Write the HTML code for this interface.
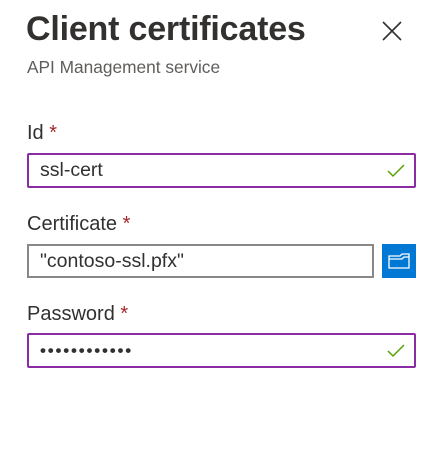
<!DOCTYPE html>
<html><head><style>
*{margin:0;padding:0;box-sizing:border-box}
body{width:441px;height:455px;background:#fff;font-family:"Liberation Sans",sans-serif;position:relative;overflow:hidden;color:#323130}
.a{position:absolute}
h1{position:absolute;left:26px;top:10px;font-size:34px;font-weight:bold;color:#323130;letter-spacing:-0.2px}
.sub{left:27px;top:57px;font-size:17.3px;color:#605e5c}
.lab{font-size:20px;left:27px;color:#323130}
.lab span{color:#a4262c}
.inp{left:27px;width:389px;height:35px;border:2px solid #8a2da5;border-radius:2px;font-size:19.5px;padding-left:11px;line-height:31px}
.chk{position:absolute;right:9px;top:9px}
</style></head><body>
<h1>Client certificates</h1>
<svg class="a" style="left:382px;top:21px" width="20" height="20" viewBox="0 0 20 20"><path d="M1 1L19 19M19 1L1 19" stroke="#323130" stroke-width="1.6" fill="none"/></svg>
<div class="a sub">API Management service</div>
<div class="a lab" style="top:122px">Id <span>*</span></div>
<div class="a inp" style="top:153px">ssl-cert<svg class="chk" width="18" height="14" viewBox="0 0 18 14"><path d="M1 7L6 12L17 1" stroke="#57a300" stroke-width="1.5" fill="none"/></svg></div>
<div class="a lab" style="top:213px">Certificate <span>*</span></div>
<div class="a" style="left:27px;top:244px;width:347px;height:34px;border:2px solid #8a8886;font-size:19.5px;padding-left:11px;line-height:30px">"contoso-ssl.pfx"</div>
<div class="a" style="left:382px;top:244px;width:34px;height:34px;background:#0078d4"><svg width="34" height="34" viewBox="0 0 34 34"><path d="M7 12H18L20 10H27V24H7Z M7 15H20L22 13H27" stroke="#fff" stroke-width="1.3" fill="none"/></svg></div>
<div class="a lab" style="top:303px">Password <span>*</span></div>
<div class="a inp" style="top:333px;letter-spacing:1.8px;font-size:17px;font-weight:bold">&#8226;&#8226;&#8226;&#8226;&#8226;&#8226;&#8226;&#8226;&#8226;&#8226;&#8226;&#8226;<svg class="chk" width="18" height="14" viewBox="0 0 18 14"><path d="M1 7L6 12L17 1" stroke="#57a300" stroke-width="1.5" fill="none"/></svg></div>
</body></html>
